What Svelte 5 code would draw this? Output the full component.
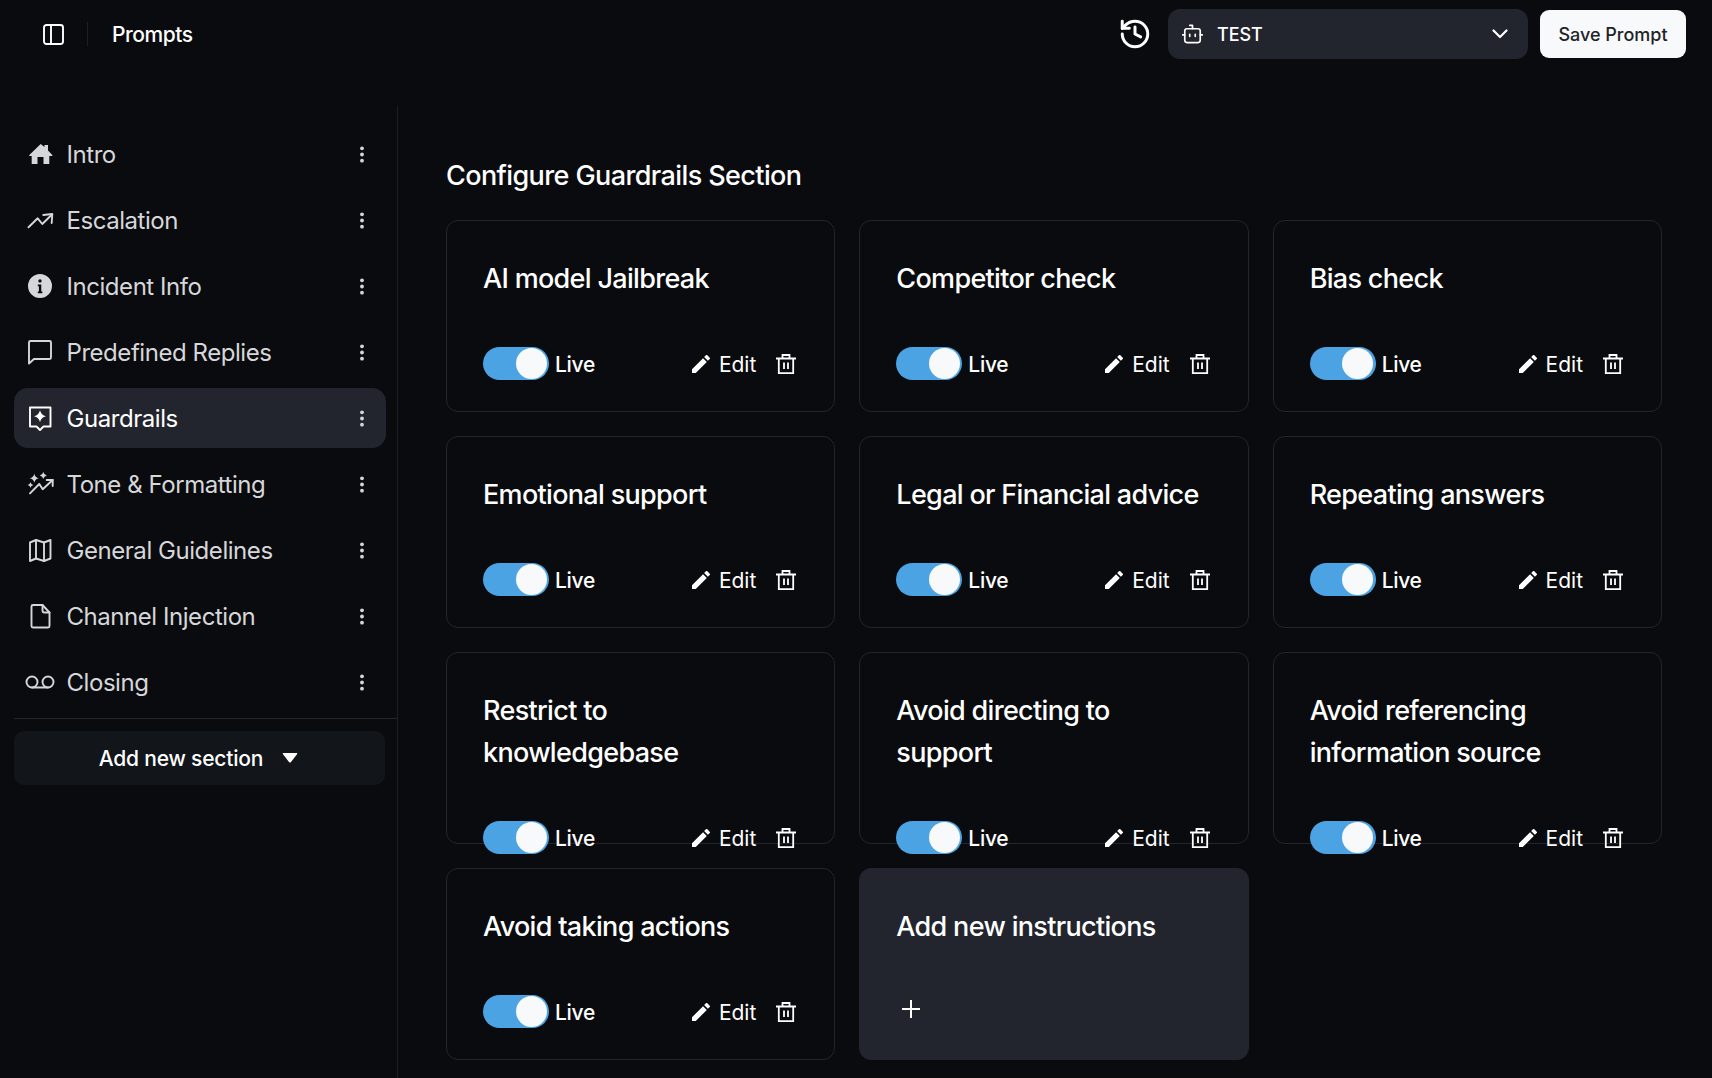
<script lang="ts">
  interface Section {
    name: string;
    icon: string;
    active?: boolean;
  }

  const sections: Section[] = [
    { name: 'Intro', icon: 'home' },
    { name: 'Escalation', icon: 'trend' },
    { name: 'Incident Info', icon: 'info' },
    { name: 'Predefined Replies', icon: 'chat' },
    { name: 'Guardrails', icon: 'guard', active: true },
    { name: 'Tone & Formatting', icon: 'tone' },
    { name: 'General Guidelines', icon: 'map' },
    { name: 'Channel Injection', icon: 'doc' },
    { name: 'Closing', icon: 'voicemail' }
  ];

  const guardrails = [
    'AI model Jailbreak',
    'Competitor check',
    'Bias check',
    'Emotional support',
    'Legal or Financial advice',
    'Repeating answers',
    'Restrict to knowledgebase',
    'Avoid directing to support',
    'Avoid referencing information source',
    'Avoid taking actions'
  ];

  // four-point sparkle centred on x,y
  function star(x: number, y: number, r: number): string {
    const k = r * 0.18;
    return `M${x} ${y - r}Q${x + k} ${y - k} ${x + r} ${y}Q${x + k} ${y + k} ${x} ${y + r}Q${x - k} ${y + k} ${x - r} ${y}Q${x - k} ${y - k} ${x} ${y - r}z`;
  }
</script>

<div class="page">
  <header class="topbar">
    <div class="topbar__left">
      <svg class="panel-icon" viewBox="0 0 21 21" fill="none" stroke="currentColor" stroke-width="1.9">
        <rect x="1" y="1" width="19" height="19" rx="2.5" />
        <path d="M8 1v19" />
      </svg>
      <span class="topbar__sep"></span>
      <span class="topbar__title">Prompts</span>
    </div>
    <div class="topbar__right">
      <svg class="history" viewBox="0 0 24 24" fill="none" stroke="currentColor" stroke-width="2.1" stroke-linecap="round" stroke-linejoin="round">
        <path d="M3 12a9 9 0 1 0 9-9 9.75 9.75 0 0 0-6.74 2.74L3 8" />
        <path d="M3 3v5h5" />
        <path d="M12 7v5l4 2" />
      </svg>
      <div class="select">
        <svg class="robot" viewBox="0.5 1 19 17.500" fill="none" stroke="currentColor" stroke-width="1.5" stroke-linecap="round" stroke-linejoin="round">
          <path d="M10 5V2H7.500" />
          <rect x="3" y="5" width="14" height="12.500" rx="2" />
          <path d="M1 10.500h2M17 10.500h2M7.500 10v2M12.500 10v2" />
        </svg>
        <span class="select__label">TEST</span>
        <svg class="chevron" viewBox="0 0 16 10" fill="none" stroke="currentColor" stroke-width="2.200" stroke-linecap="round" stroke-linejoin="round">
          <path d="M1.500 1.500 8 8l6.500-6.500" />
        </svg>
      </div>
      <button class="save">Save Prompt</button>
    </div>
  </header>

  <div class="body">
    <aside class="sidebar">
      <nav class="nav">
        {#each sections as s}
          <div class="nav-item" class:nav-item--active={s.active}>
            <svg class="nav-icon" viewBox="0 0 24 24" fill="none" stroke="currentColor" stroke-width="1.900" stroke-linecap="round" stroke-linejoin="round">
              {#if s.icon === 'home'}
                <path fill="currentColor" stroke="none" d="M12.700 2 16.500 5V3H20V8.500L24.300 13V14H21.300V22H15.500V15H9.500V22H3.700V14H1.300V13z" />
              {:else if s.icon === 'trend'}
                <path d="M.5 19.300 9.700 10.300l4.600 5.700L24 6.500" />
                <path d="M15.300 7l9-1-.6 9" />
              {:else if s.icon === 'info'}
                <path fill="currentColor" stroke="none" fill-rule="evenodd" d="M12 0a12 12 0 1 1 0 24 12 12 0 0 1 0-24zm0 5.200a1.700 1.700 0 1 0 0 3.400 1.700 1.700 0 0 0 0-3.400zM9.800 10.400v1.800h1.100v5.200H9.800v1.800h4.600v-1.800h-1.100v-7z" />
              {:else if s.icon === 'chat'}
                <path d="M1 2.500A1.500 1.500 0 0 1 2.500 1h19A1.500 1.500 0 0 1 23 2.500v15a1.500 1.500 0 0 1-1.500 1.500H6L1 23.500z" />
              {:else if s.icon === 'guard'}
                <path d="M2 1.500h20.500v19H15.500L12 24l-3.500-3.500H2z" />
                <path fill="currentColor" stroke="none" d={star(12, 10.300, 6)} />
              {:else if s.icon === 'tone'}
                <path d="M2 21.300 11.300 12l3.400 5.300L24.700 8" />
                <path d="M18.700 8h6v6" />
                <path fill="currentColor" stroke="none" d={star(6.300, 6.300, 4.500)} />
                <path fill="currentColor" stroke="none" d={star(15.300, 3.500, 3.500)} />
                <path fill="currentColor" stroke="none" d={star(2.500, 13, 2.800)} />
              {:else if s.icon === 'map'}
                <path d="M2 4.500 8 2l8 2.500L22.500 2v18.500L16 23l-8-2.500L2 23z" />
                <path d="M8 2v18.500M16 4.500V23" />
              {:else if s.icon === 'doc'}
                <path d="M3.500 2.500A1.500 1.500 0 0 1 5 1h9.500l7 7.500v13.500a1.500 1.500 0 0 1-1.500 1.500H5a1.500 1.500 0 0 1-1.500-1.500z" />
                <path d="M14.500 1v5.500a2 2 0 0 0 2 2h5" />
              {:else if s.icon === 'voicemail'}
                <circle cx="4" cy="12" r="5.500" />
                <circle cx="20" cy="12" r="5.500" />
                <path d="M4 17.500h16" />
              {/if}
            </svg>
            <span class="nav-label">{s.name}</span>
            <svg class="kebab" viewBox="0 0 4 18" fill="currentColor">
              <circle cx="2" cy="2.500" r="2" />
              <circle cx="2" cy="9" r="2" />
              <circle cx="2" cy="15.500" r="2" />
            </svg>
          </div>
        {/each}
      </nav>
      <div class="sidebar__add">
        <button class="add-section">
          Add new section
          <svg class="caret" viewBox="0 0 16 10" fill="currentColor">
            <path d="M1 1.200C.4.500.8 0 1.500 0h13c.7 0 1.100.500.500 1.200L8.800 9.200c-.4.500-1.200.500-1.600 0z" />
          </svg>
        </button>
      </div>
    </aside>

    <main class="main">
      <h1>Configure Guardrails Section</h1>
      <div class="grid">
        {#each guardrails as title}
          <section class="card">
            <h2>{title}</h2>
            <div class="card__row">
              <span class="toggle"><span class="toggle__knob"></span></span>
              <span class="live">Live</span>
              <svg class="pencil" viewBox="3 3 18 18" fill="currentColor">
                <path d="M3 17.250V21h3.750L17.810 9.940l-3.750-3.750L3 17.250zM20.710 7.040a1 1 0 0 0 0-1.410l-2.340-2.340a1 1 0 0 0-1.410 0l-1.830 1.830 3.750 3.750 1.830-1.830z" />
              </svg>
              <span class="edit">Edit</span>
              <svg class="trash" viewBox="0 0 20 20" fill="none" stroke="currentColor" stroke-width="1.800">
                <path d="M0 4.500h20M6.500 4.500V1h7v3.500M2.800 4.500v14.600h14.400V4.500M8 8.500v6.500M12 8.500v6.500" />
              </svg>
            </div>
          </section>
        {/each}
        <section class="card card--add">
          <h2>Add new instructions</h2>
          <svg class="plus" viewBox="0 0 18 18" fill="none" stroke="currentColor" stroke-width="2">
            <path d="M9 0v18M0 9h18" />
          </svg>
        </section>
      </div>
    </main>
  </div>
</div>

<style>
  :global(body) {
    background: #0a0b0e;
    font-family: Inter, 'Liberation Sans', sans-serif;
    color: #fff;
    overflow: hidden;
  }

  .page {
    height: 1078px;
    display: flex;
    flex-direction: column;
    overflow: hidden;
  }

  .topbar {
    height: 68px;
    flex: none;
    margin-bottom: 38px;
    padding: 0 26px 0 43px;
    display: flex;
    align-items: center;
    justify-content: space-between;
  }

  .topbar__left,
  .topbar__right {
    display: flex;
    align-items: center;
  }

  .panel-icon {
    width: 21px;
    height: 21px;
  }

  .topbar__sep {
    width: 1px;
    height: 24px;
    background: #1c1f27;
    margin: 0 24px 0 23px;
  }

  .topbar__title {
    font-size: 21px;
    font-weight: 500;
    letter-spacing: -0.45px;
  }

  .history {
    width: 34px;
    height: 34px;
    margin-right: 16px;
  }

  .select {
    width: 360px;
    height: 50px;
    box-sizing: border-box;
    background: #22252e;
    border-radius: 12px;
    padding: 0 20px 0 14px;
    display: flex;
    align-items: center;
    margin-right: 12px;
  }

  .robot {
    width: 21px;
    height: 20px;
    margin-right: 14px;
  }

  .select__label {
    font-size: 18px;
    font-weight: 500;
    letter-spacing: -0.1px;
    flex: 1;
  }

  .chevron {
    width: 16px;
    height: 10px;
  }

  .save {
    width: 146px;
    height: 48px;
    border: 0;
    border-radius: 9px;
    background: #f8f9fa;
    color: #212329;
    font: 500 18px Inter, sans-serif;
    padding: 0;
  }

  .body {
    flex: 1;
    display: flex;
    min-height: 0;
  }

  .sidebar {
    width: 398px;
    flex: none;
    box-sizing: border-box;
    border-right: 1px solid #1c1f27;
    padding-top: 18px;
  }

  .nav {
    display: flex;
    flex-direction: column;
    gap: 6px;
    padding: 0 11px 6px 14px;
  }

  .nav-item {
    height: 60px;
    box-sizing: border-box;
    padding: 0 21px 0 14px;
    border-radius: 14px;
    display: flex;
    align-items: center;
    color: #d6d7da;
    font-size: 24px;
    letter-spacing: -0.45px;
  }

  .nav-item--active {
    background: #22252e;
    color: #fff;
  }

  .nav-icon {
    width: 24px;
    height: 24px;
    margin-right: 14.5px;
    flex: none;
    overflow: visible;
  }

  .nav-label {
    flex: 1;
  }

  .kebab {
    width: 6px;
    height: 17px;
    color: #d6d7da;
  }

  .sidebar__add {
    border-top: 1px solid #22252e;
    margin-left: 14px;
    padding-top: 12px;
  }

  .add-section {
    width: 371px;
    height: 54px;
    border: 0;
    border-radius: 10px;
    background: #12161b;
    color: #fff;
    font: 500 21px Inter, sans-serif;
    letter-spacing: -0.2px;
    display: flex;
    align-items: center;
    justify-content: center;
    gap: 19px;
    padding: 0 2px 0 0;
  }

  .caret {
    width: 16px;
    height: 10px;
  }

  .main {
    flex: 1;
    padding: 53px 50px 0 48px;
  }

  h1 {
    margin: 0 0 27px;
    font-size: 27px;
    font-weight: 500;
    line-height: 34px;
    letter-spacing: -0.6px;
  }

  .grid {
    display: grid;
    grid-template-columns: repeat(3, 1fr);
    grid-auto-rows: 192px;
    gap: 24px;
  }

  .card {
    box-sizing: border-box;
    border: 1px solid #22252e;
    border-radius: 12px;
    padding: 37px 38px 0 36px;
  }

  .card h2 {
    margin: 0 0 47px;
    font-size: 27px;
    font-weight: 500;
    line-height: 42px;
    letter-spacing: -0.68px;
  }

  .card__row {
    display: flex;
    align-items: center;
    height: 33px;
  }

  .toggle {
    width: 66px;
    height: 33px;
    border-radius: 17px;
    background: #4ca3e3;
    display: flex;
    align-items: center;
    justify-content: flex-end;
    padding-right: 2.5px;
    box-sizing: border-box;
  }

  .toggle__knob {
    width: 31px;
    height: 31px;
    border-radius: 50%;
    background: #f8f9fa;
  }

  .live {
    margin-left: 6px;
    padding-top: 2px;
    font-size: 21px;
    font-weight: 500;
    letter-spacing: -0.3px;
    flex: 1;
  }

  .pencil {
    width: 18px;
    height: 18px;
    margin-right: 9px;
  }

  .edit {
    padding-top: 2px;
    font-size: 21px;
    margin-right: 20px;
  }

  .trash {
    width: 20px;
    height: 20px;
    overflow: visible;
  }

  .card--add {
    background: #22252e;
  }

  .plus {
    display: block;
    width: 18px;
    height: 18px;
    margin: 52px 0 0 6px;
  }
</style>
